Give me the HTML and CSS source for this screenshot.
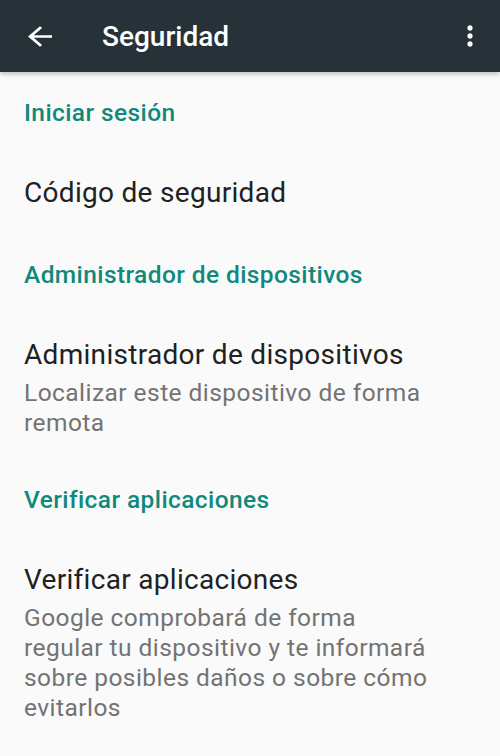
FILE: index.html
```html
<!DOCTYPE html>
<html lang="es">
<head>
  <meta charset="UTF-8">
  <title>Seguridad</title>
  <link rel="stylesheet" href="styles.css">
</head>
<body>
  <div class="appbar">
    <svg class="back" width="36" height="31" viewBox="0 0 24 24" preserveAspectRatio="none">
      <path d="M20 11H7.83l5.59-5.59L12 4l-8 8 8 8 1.41-1.41L7.83 13H20v-2z" fill="#fff"/>
    </svg>
    <h1 class="title">Seguridad</h1>
    <svg class="menu" width="32" height="32" viewBox="0 0 24 24">
      <path d="M12 8c1.1 0 2-.9 2-2s-.9-2-2-2-2 .9-2 2 .9 2 2 2zm0 2c-1.1 0-2 .9-2 2s.9 2 2 2 2-.9 2-2-.9-2-2-2zm0 6c-1.1 0-2 .9-2 2s.9 2 2 2 2-.9 2-2-.9-2-2-2z" fill="#fff"/>
    </svg>
  </div>

  <div class="list">
    <div class="category">Iniciar sesión</div>
    <div class="item single">
      <div class="item-title">Código de seguridad</div>
    </div>

    <div class="category">Administrador de dispositivos</div>
    <div class="item">
      <div class="item-title">Administrador de dispositivos</div>
      <div class="item-summary">Localizar este dispositivo de forma remota</div>
    </div>

    <div class="category">Verificar aplicaciones</div>
    <div class="item">
      <div class="item-title">Verificar aplicaciones</div>
      <div class="item-summary">Google comprobará de forma regular tu dispositivo y te informará sobre posibles daños o sobre cómo evitarlos</div>
    </div>
  </div>
</body>
</html>
```

FILE: styles.css
```css
body {
  margin: 0;
  background: #fafafa;
  font-family: Roboto, "Noto Sans", sans-serif;
}

.appbar {
  display: flex;
  align-items: center;
  height: 72px;
  background: #263238;
  box-shadow: 0 2px 5px rgba(0, 0, 0, 0.25);
  position: relative;
}

.back {
  margin-left: 22px;
}

.title {
  margin: 0 0 0 44px;
  font-size: 28px;
  font-weight: 500;
  color: #fff;
}

.menu {
  margin-left: auto;
  margin-right: 14px;
}

.list {
  padding: 2px 66px 0 24px;
}

.category {
  padding-top: 24px;
  font-size: 24.5px;
  line-height: 30px;
  font-weight: 500;
  letter-spacing: 0.4px;
  color: #10897b;
}

.item {
  padding: 48px 0 23px;
}

.item.single {
  padding-bottom: 26px;
}

.item-title {
  font-size: 28px;
  line-height: 34px;
  letter-spacing: 0.3px;
  color: #212121;
  white-space: nowrap;
}

.item-summary {
  margin-top: 6px;
  font-size: 24.5px;
  line-height: 30px;
  letter-spacing: 0.45px;
  color: #737373;
}
```
